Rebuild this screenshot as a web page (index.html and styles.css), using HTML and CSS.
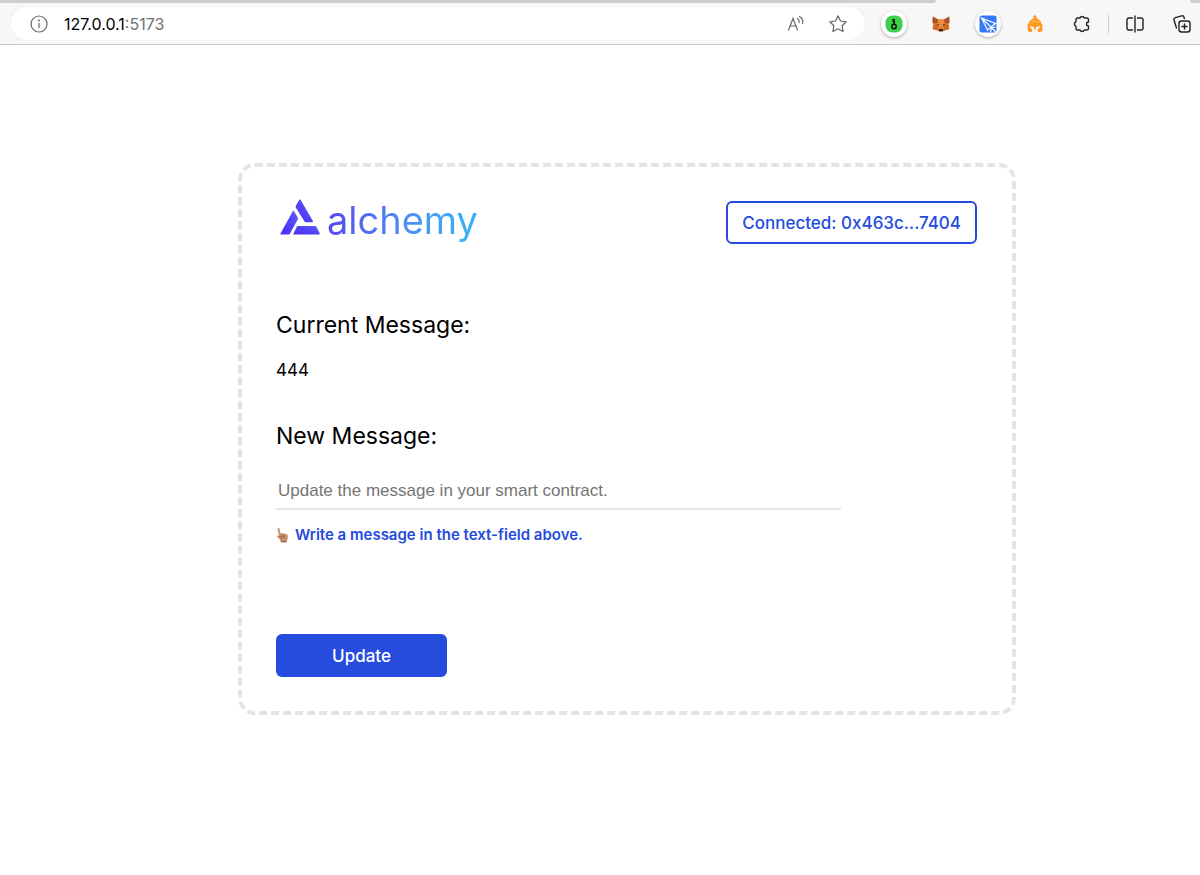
FILE: index.html
```html
<!DOCTYPE html>
<html lang="en">
<head>
    <meta charset="UTF-8">
    <meta name="viewport" content="width=device-width, initial-scale=1.0">
    <title>Hello World</title>
    <link rel="stylesheet" href="styles.css">
</head>
<body>
<!-- browser bar -->
<header class="browser">
    <div class="tabs"><span class="tabs-left"></span><span class="tabs-right"></span></div>
    <div class="toolbar">
        <div class="address">
            <button class="icon-btn" type="button" aria-label="Site information">
                <svg width="18" height="18" viewBox="0 0 18 18" fill="none" stroke="#666" stroke-width="1.2"><circle cx="9" cy="9" r="8"/><path d="M9 8v5"/><circle cx="9" cy="5.4" r=".4" fill="#666"/></svg>
            </button>
            <span class="url">127.0.0.1<span class="port">:5173</span></span>
            <button class="icon-btn" type="button" aria-label="Read aloud">
                <svg width="18" height="18" viewBox="0 0 18 18" fill="none" stroke="#666" stroke-width="1.2" stroke-linecap="round"><path d="M1.500 15L6 3.500L10.500 15M3 11h6M10.500 3.500q2.200 1.600 1.700 4.200M12.500 1.500q4 2.700 3.300 7"/></svg>
            </button>
            <button class="icon-btn star" type="button" aria-label="Add to favorites">
                <svg width="20" height="20" viewBox="0 0 20 20" fill="none" stroke="#666" stroke-width="1.2" stroke-linejoin="round"><path d="M10 1.800l2.500 5.200 5.700.8-4.100 4 1 5.700-5.100-2.700-5.100 2.700 1-5.700-4.100-4 5.700-.8z"/></svg>
            </button>
        </div>
        <div class="extensions">
            <button class="icon-btn round" type="button" aria-label="Wallet">
                <svg width="18" height="18" viewBox="0 0 18 18"><rect x=".5" y=".5" width="17" height="17" rx="7" fill="#3bd149"/><path d="M7 4.700h2.200v4.500M9.200 6.800H7.500" fill="none" stroke="#111" stroke-width="1.4"/><circle cx="9" cy="11.500" r="2.200" fill="none" stroke="#111" stroke-width="1.500"/></svg>
            </button>
            <button class="icon-btn" type="button" aria-label="MetaMask">
                <svg width="18" height="18" viewBox="0 0 18 18"><path d="M.8 1.500L6 4.500h6l5.200-3L17.500 7l-.8 3 .6 4-3.800 1.200L11 16.500H7l-2.500-1.300L.7 14l.6-4-.8-3z" fill="#e77d31"/><path d="M.8 1.500L6 4.500 5.500 8l-4 .5L.5 7zM17.200 1.500L12 4.500l.5 3.500 4 .5 1-1.500z" fill="#a8542b"/><path d="M6 4.500h6L11 12H7z" fill="#ef8b3c"/><path d="M1.300 10L5 9.500 6.500 14l-2 1.200L.7 14zM16.700 10L13 9.500 11.500 14l2 1.200 3.800-1.200z" fill="#d4691f"/><path d="M4.500 9l2.500.5-.5 1.500zM13.500 9l-2.500.5.5 1.500zM7 14h4v2.300H7z" fill="#25292f"/></svg>
            </button>
            <button class="icon-btn round" type="button" aria-label="Send">
                <svg width="18" height="18" viewBox="0 0 18 18"><rect x=".5" y=".5" width="17" height="17" rx="2" fill="#3478f6"/><path d="M2.500 3L16.500 8.500 8.500 15zM2.500 3l9 8.500M11.500 17l1-4 4-1M12.500 13l4.500 4" fill="none" stroke="#fff" stroke-width="1.2"/></svg>
            </button>
            <button class="icon-btn" type="button" aria-label="Helmet">
                <svg width="18" height="18" viewBox="0 0 18 18"><circle cx="9" cy="1.800" r="1.600" fill="#fb9a1d"/><path d="M6 4.200Q9 1.500 12 4.200Q15.500 6 15.700 10H2.300Q2.500 6 6 4.200z" fill="#fb9a1d"/><path d="M1.600 9h14.800v6.500q-1.500 2-4.400 1.500l-.5-2.300q2.500-1.200 2.500-3.700l-3.700 1L9 16l-1.300-4L4 11q0 2.500 2.500 3.700L6 17q-2.900.5-4.400-1.500z" fill="#fb9a1d"/><path d="M4 7.500Q9 4.500 14 7.500" fill="none" stroke="#ffc36e" stroke-width=".8"/></svg>
            </button>
            <button class="icon-btn" type="button" aria-label="Extensions">
                <svg width="18" height="18" viewBox="0 0 18 18" fill="none" stroke="#222" stroke-width="1.4" stroke-linejoin="round"><path d="M4.500 3H7a2.300 2.300 0 0 1 4.300 0H14a1.500 1.500 0 0 1 1.500 1.500V7a2 2 0 0 0 0 4v2.500A1.500 1.500 0 0 1 14 15h-2.700A2.300 2.300 0 0 1 7 15H4.500A1.500 1.500 0 0 1 3 13.500v-2.300a2.300 2.300 0 0 1 0-4.400V4.500A1.500 1.500 0 0 1 4.500 3z"/></svg>
            </button>
            <span class="divider"></span>
            <button class="icon-btn" type="button" aria-label="Split screen">
                <svg width="18" height="18" viewBox="0 0 18 18" fill="none" stroke="#222" stroke-width="1.4" stroke-linecap="round"><path d="M9 1v16M6.500 3H3a2 2 0 0 0-2 2v8a2 2 0 0 0 2 2h3.500M11.500 3H15a2 2 0 0 1 2 2v8a2 2 0 0 1-2 2h-3.500"/></svg>
            </button>
            <button class="icon-btn last" type="button" aria-label="Collections">
                <svg width="18" height="18" viewBox="0 0 18 18" fill="none" stroke="#222" stroke-width="1.4" stroke-linecap="round"><rect x="6" y="6" width="11" height="11" rx="2.500"/><path d="M11.500 9v5M9 11.500h5M3.500 13L1 5a2 2 0 0 1 1.300-2.400L8.500.8A2 2 0 0 1 11 2.200l.4 1.300"/></svg>
            </button>
        </div>
    </div>
</header>

<main>
    <div class="container">
        <div class="top">
            <div class="logo">
                <svg width="40" height="36" viewBox="0 0 40 36">
                    <defs>
                        <linearGradient id="mark" x1="0" y1="1" x2="1" y2="0">
                            <stop offset="0" stop-color="#4a2cf5"/>
                            <stop offset="1" stop-color="#5a5cfa"/>
                        </linearGradient>
                    </defs>
                    <path d="M19.500.5Q20 0 20.500.8L33 22.200Q33.300 23.200 32 23.200H26Q25 23.200 24.500 22.400L15.800 8.500Q15.300 7.500 15.800 6.700z" fill="url(#mark)"/>
                    <path d="M13.900 12L17.800 18.500Q18.200 19.500 17.700 20.500L10 34.500Q9.500 35.500 8.500 35.500H.8Q0 35.500.5 34.500L12.900 12Q13.400 11.200 13.900 12z" fill="url(#mark)"/>
                    <path d="M17.800 27H35Q36 27 36.500 27.900L39.800 34.500Q40 35.500 39 35.500H14Q13 35.500 13.500 34.500L16.800 27.700Q17.100 27 17.800 27z" fill="url(#mark)"/>
                </svg>
                <span class="brand">alchemy</span>
            </div>
            <button class="wallet" type="button">Connected: 0x463c...7404</button>
        </div>

        <h2>Current Message:</h2>
        <p class="message">444</p>

        <h2><label for="message">New Message:</label></h2>
        <input id="message" type="text" placeholder="Update the message in your smart contract.">
        <p class="status">
            <svg width="13" height="16" viewBox="0 0 13 16"><path d="M1.500 1.500Q2.500.3 3.500 1.500L4.500 6.500q1-1 2 0 1-.6 2 .3 1-.5 1.800.5 1.500-.2 1.500 1.500L11.500 12l-1 3.500H5L3.500 12 1 9.500q0-1.200 1-1l1 .5z" fill="#c68e6b"/><path d="M6.300 7.500v3M8.300 7.800v2.800M3.500 9.500q3 .5 2 2.500M10.500 14.500H5" fill="none" stroke="#936044" stroke-width=".8"/></svg>
            <span>Write a message in the text-field above.</span>
        </p>
        <button class="update" type="button">Update</button>
    </div>
</main>
</body>
</html>
```
FILE: styles.css
```css
* {
    box-sizing: border-box;
}

body {
    margin: 0;
    background: #fff;
    color: #000;
    font-family: Inter, "Liberation Sans", sans-serif;
}

button {
    font-family: inherit;
    cursor: pointer;
}

/* browser bar */
.browser {
    background: #f7f7f7;
    border-bottom: 1px solid #c8c8c8;
}

.tabs {
    display: flex;
    justify-content: space-between;
    height: 3px;
}

.tabs-left {
    width: 78%;
    background: #cdcdcd;
    border-radius: 0 0 4px 0;
}

.tabs-right {
    width: 10px;
    background: #cdcdcd;
    border-radius: 0 0 0 4px;
}

.toolbar {
    display: flex;
    align-items: center;
    gap: 16px;
    height: 41px;
    padding: 0 5px 0 11px;
}

.address {
    flex: 1;
    display: flex;
    align-items: center;
    height: 33px;
    padding: 0 17px 0 19px;
    border-radius: 17px;
    background: #fff;
    box-shadow: 0 0 3px #eee;
}

.url {
    flex: 1;
    margin-left: 16px;
    font-size: 16px;
}

.port {
    color: #707070;
}

.icon-btn {
    display: flex;
    align-items: center;
    justify-content: center;
    flex: none;
    padding: 0;
    border: 0;
    background: none;
}

.star {
    margin-left: 23px;
}

.extensions {
    display: flex;
    align-items: center;
}

.extensions .icon-btn {
    width: 26px;
    height: 26px;
}

.extensions .icon-btn + .icon-btn {
    margin-left: 21px;
}

.round {
    border-radius: 50%;
    background: #fff;
    box-shadow: 0 1px 3px #aaa;
}

.divider {
    width: 1px;
    height: 18px;
    margin: 0 13px;
    background: #ccc;
}

/* page */
main {
    padding: 118px 0 40px 54px;
}

.container {
    max-width: 778px;
    margin: 0 auto;
    padding: 32px 35px 34px 34px;
    border: 4px dashed #e4e4e4;
    border-radius: 17px;
}

.top {
    display: flex;
    align-items: flex-start;
    justify-content: space-between;
    margin-bottom: 64px;
}

.logo {
    display: flex;
    align-items: flex-start;
    gap: 7px;
    padding-left: 4px;
}

.brand {
    font-size: 38px;
    line-height: 42px;
    padding-bottom: 3px;
    background: linear-gradient(90deg, #5548f0, #4d8df5 50%, #35b5f5);
    -webkit-background-clip: text;
    background-clip: text;
    color: transparent;
}

.wallet {
    height: 43px;
    margin-top: 2px;
    padding: 0 14px;
    border: 2px solid #254cdd;
    border-radius: 6px;
    background: #fff;
    color: #254cdd;
    font-size: 17px;
    font-weight: 500;
}

h2 {
    margin: 0;
    font-size: 23px;
    font-weight: 400;
    line-height: 34px;
}

.message {
    margin: 16px 0 37px;
    font-size: 17px;
    line-height: 24px;
}

#message {
    display: block;
    width: calc(100% - 136px);
    height: 41px;
    margin: 16px 0 15px;
    padding: 4px 2px 0;
    border: 0;
    border-bottom: 2px solid #e4e4e4;
    font-family: "Liberation Sans", Arial, sans-serif;
    font-size: 17px;
}

#message::placeholder {
    color: #757575;
}

.status {
    display: flex;
    align-items: center;
    gap: 6px;
    margin: 0 0 89px;
    color: #254cdd;
    font-size: 15px;
    font-weight: 600;
    line-height: 20px;
}

.update {
    width: 171px;
    height: 43px;
    border: 0;
    border-radius: 6px;
    background: #254cdd;
    color: #fff;
    font-size: 17px;
    font-weight: 500;
}
```
